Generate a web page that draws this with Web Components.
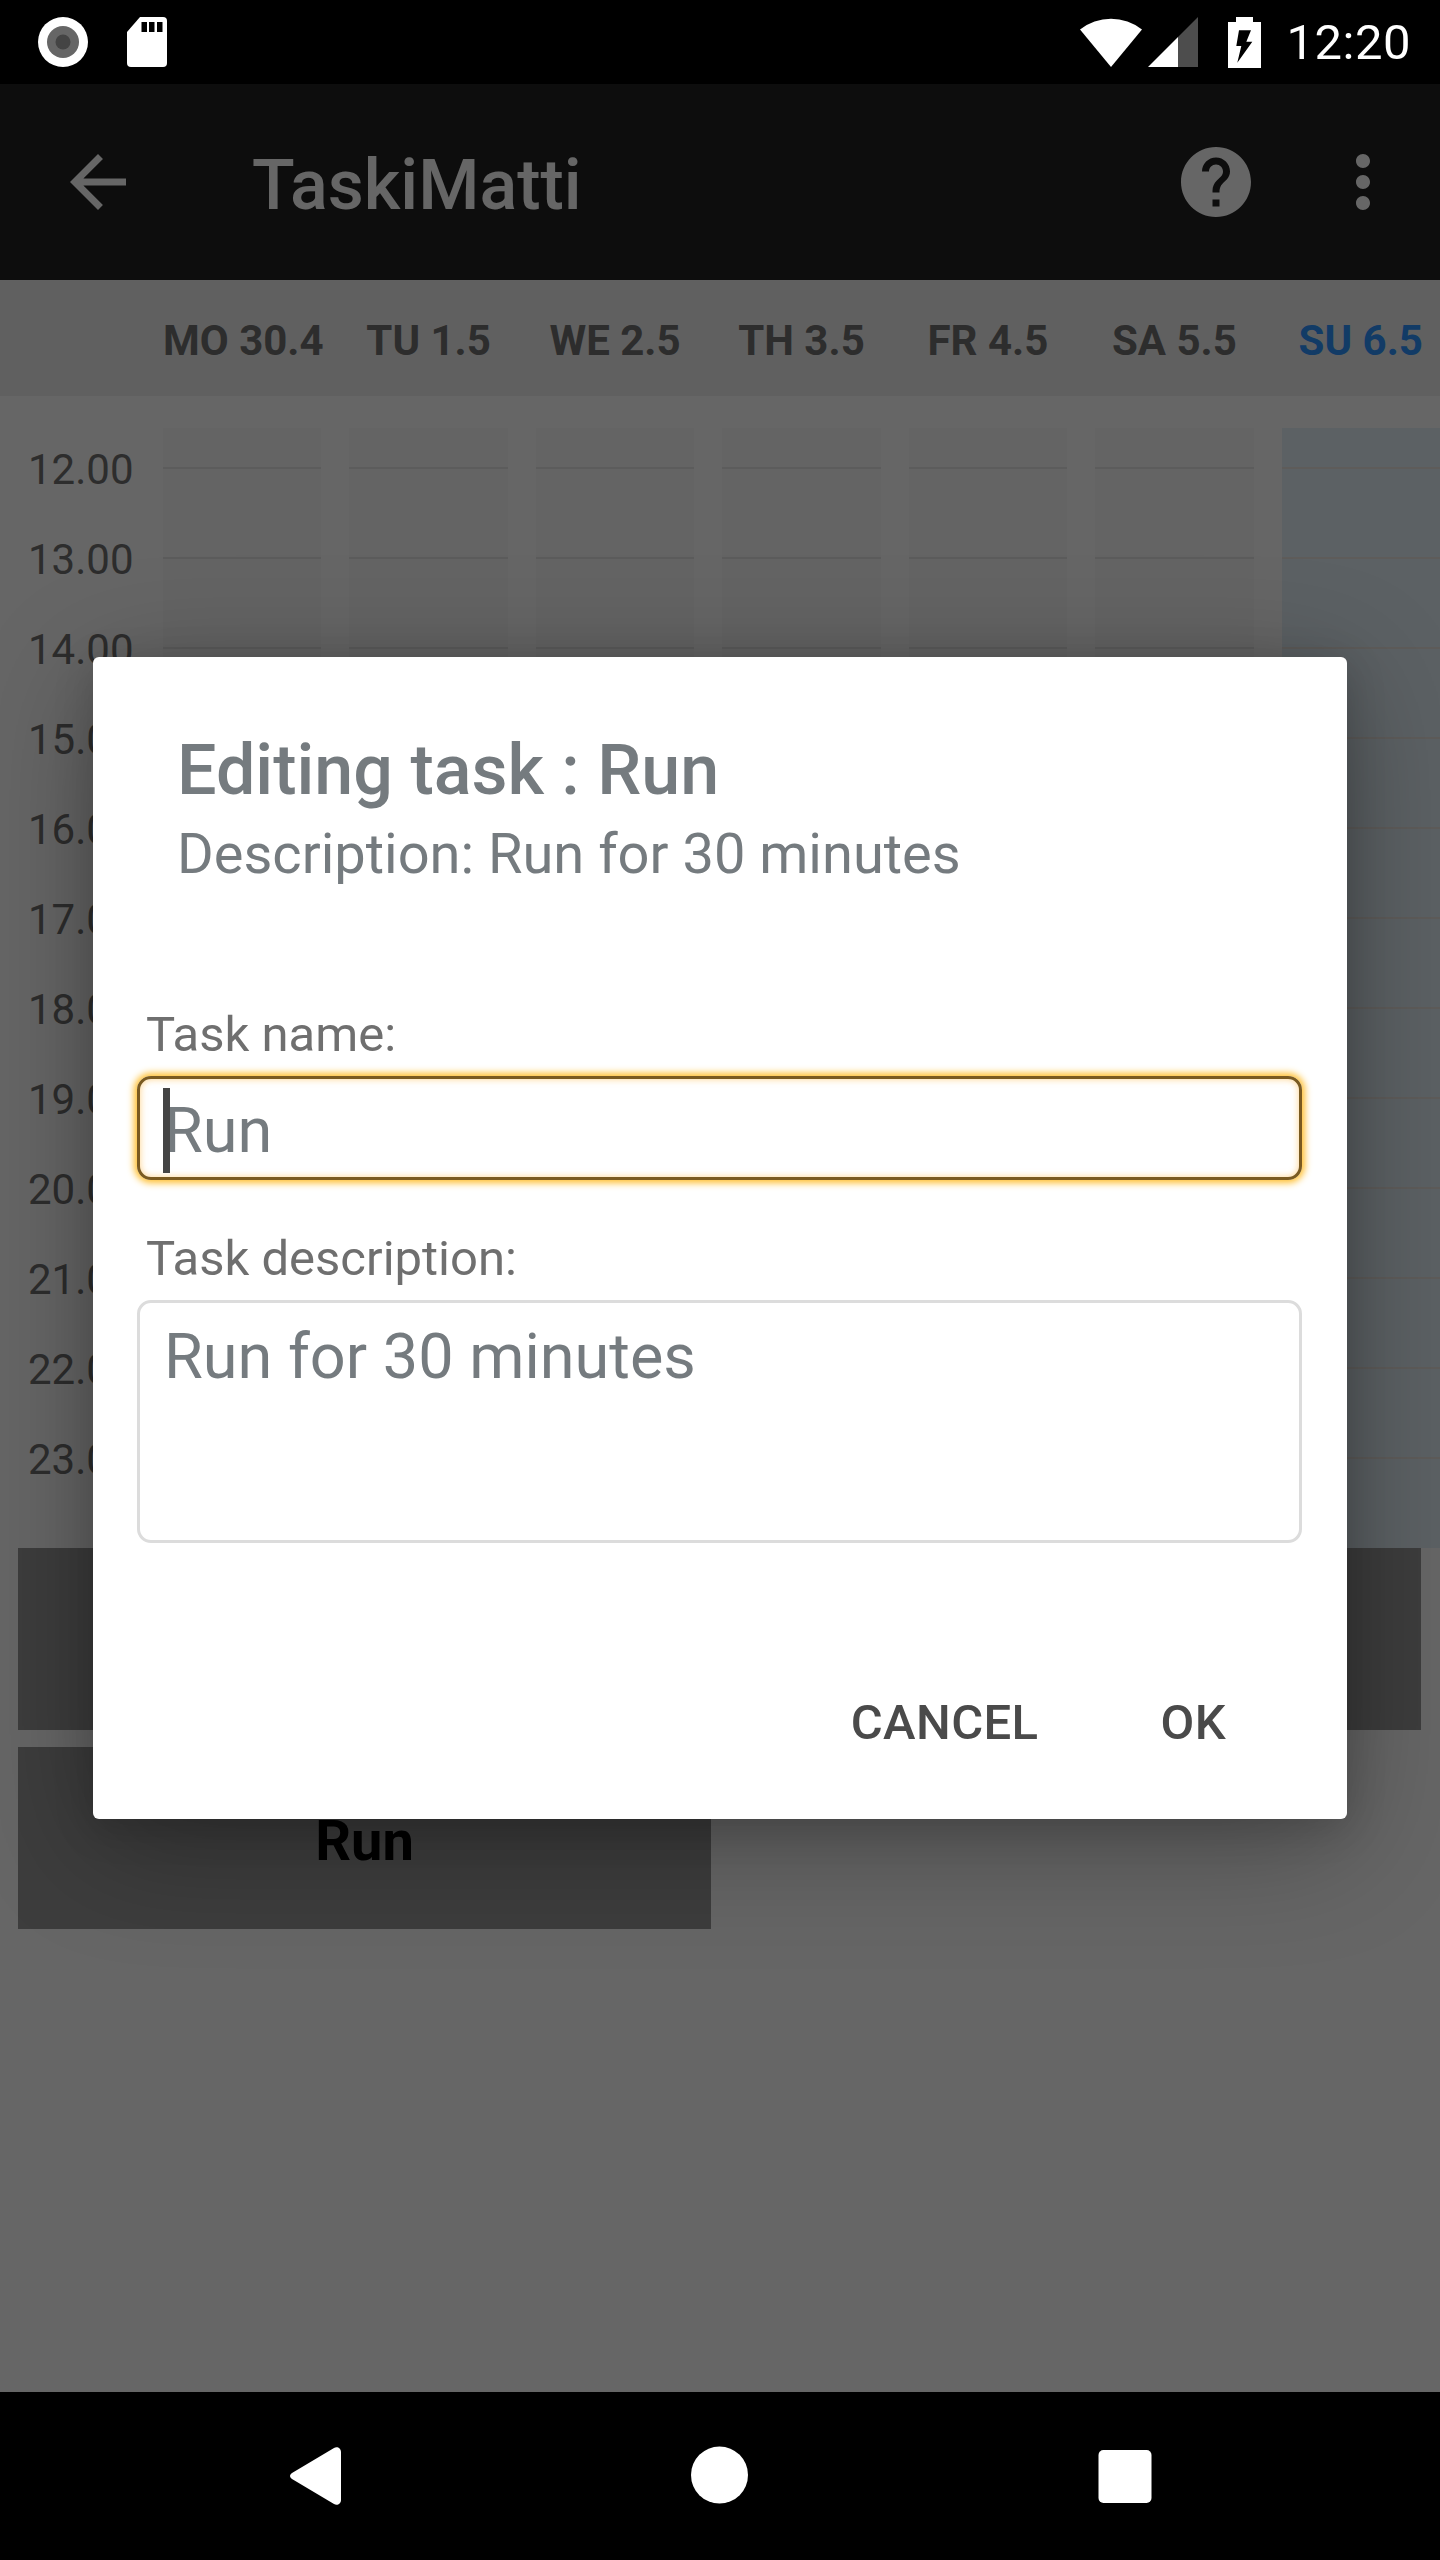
<!DOCTYPE html>
<html>
<head>
<meta charset="utf-8">
<title>TaskiMatti</title>
<style>
	html, body { margin: 0; padding: 0; background: #fff; }
	body { font-family: Roboto, "Liberation Sans", sans-serif; }
</style>
</head>
<body>

<task-app>
	<status-bar></status-bar>
	<app-toolbar>TaskiMatti</app-toolbar>
	<day-header>
		<span>MO 30.4</span><span>TU 1.5</span><span>WE 2.5</span><span>TH 3.5</span><span>FR 4.5</span><span>SA 5.5</span><span class="today">SU 6.5</span>
	</day-header>
	<week-grid>
		<hour-row>12.00</hour-row>
		<hour-row>13.00</hour-row>
		<hour-row>14.00</hour-row>
		<hour-row>15.00</hour-row>
		<hour-row>16.00</hour-row>
		<hour-row>17.00</hour-row>
		<hour-row>18.00</hour-row>
		<hour-row>19.00</hour-row>
		<hour-row>20.00</hour-row>
		<hour-row>21.00</hour-row>
		<hour-row>22.00</hour-row>
		<hour-row>23.00</hour-row>
	</week-grid>
	<task-list>
		<task-tile class="wide">Exercise</task-tile>
		<task-tile>Run</task-tile>
	</task-list>
	<nav-bar></nav-bar>
	<edit-dialog>
		<span slot="title">Editing task : Run</span>
		<span slot="subtitle">Description: Run for 30 minutes</span>
		<form-field label="Task name:" focused>Run</form-field>
		<form-field label="Task description:" multiline>Run for 30 minutes</form-field>
	</edit-dialog>
</task-app>

<script>
(function(){

	function define(name, html, setup) {
		const tmpl = document.createElement("template");
		tmpl.innerHTML = html;
		customElements.define(name, class extends HTMLElement {
			constructor() {
				super();
				this.attachShadow({mode: "open"}).appendChild(tmpl.content.cloneNode(true));
			}
			connectedCallback() {
				if (setup) setup(this);
			}
		});
	}

	define("task-app", `
		<style>
			:host {
				display: flex;
				flex-direction: column;
				position: relative;
				width: 1440px;
				height: 2560px;
				overflow: hidden;
				background: #fff;
			}
			.scrim {
				position: absolute;
				left: 0;
				right: 0;
				top: 84px;
				bottom: 168px;
				background: rgba(0, 0, 0, .6);
			}
		</style>
		<slot></slot>
		<div class="scrim"></div>
		<slot name="over"></slot>
	`);

	define("status-bar", `
		<style>
			:host {
				display: flex;
				flex: none;
				position: relative;
				z-index: 2;
				align-items: center;
				height: 84px;
				background: #000;
				color: #fff;
				padding: 0 29px 0 38px;
				box-sizing: border-box;
				font: 400 49px/84px Roboto, sans-serif;
			}
			svg { display: block; flex: none; }
			.sd { margin-left: 39px; }
			.wifi { margin-left: auto; }
			.signal { margin-left: 6px; }
			.batt { margin-left: 30px; }
			.time { margin-left: 25px; margin-top: 2px; letter-spacing: .5px; }
		</style>
		<svg width="50" height="50" viewBox="0 0 50 50">
			<circle cx="25" cy="25" r="25" fill="#fff"/>
			<circle cx="25" cy="25" r="16" fill="#666"/>
			<circle cx="25" cy="25" r="7.5" fill="#444"/>
		</svg>
		<svg class="sd" width="40" height="50" viewBox="0 0 40 50">
			<path fill="#fff" d="M13 0H36a4 4 0 0 1 4 4V46a4 4 0 0 1-4 4H4a4 4 0 0 1-4-4V15z"/>
			<path fill="#000" d="M14.500 5H20V15H14.500zM22 5H27.500V15H22zM30 5H35.500V15H30z"/>
		</svg>
		<svg class="wifi" width="62" height="50" viewBox="0 0 62 50">
			<path fill="#fff" d="M31 50L0 12.500A50 50 0 0 1 62 12.500z"/>
		</svg>
		<svg class="signal" width="50" height="50" viewBox="0 0 50 50">
			<path fill="#4d4d4d" d="M50 0V50H30V20z"/>
			<path fill="#fff" d="M0 50L30 20V50z"/>
		</svg>
		<svg class="batt" width="33" height="51" viewBox="0 0 33 51">
			<path fill="#fff" fill-rule="evenodd" d="M8 0H25V5H33V51H0V5H8z M11 13.300H23L18.300 24.700H24.300L9.300 45.700L13.300 29H8.300z"/>
		</svg>
		<span class="time">12:20</span>
	`);

	define("app-toolbar", `
		<style>
			:host {
				display: flex;
				flex: none;
				align-items: center;
				height: 196px;
				padding-left: 56px;
				padding-right: 35px;
				box-sizing: border-box;
				background: #212121;
				color: #fff;
				font: 500 70px/196px Roboto, sans-serif;
			}
			svg { display: block; flex: none; fill: #fff; }
			.title { margin-left: 112px; margin-right: auto; padding-top: 6px; }
			.more { margin-left: 63px; }
		</style>
		<svg width="84" height="84" viewBox="0 0 24 24"><path d="M20 11H7.830l5.590-5.590L12 4l-8 8 8 8 1.410-1.410L7.830 13H20v-2z"/></svg>
		<span class="title"><slot></slot></span>
		<svg width="84" height="84" viewBox="0 0 24 24"><path d="M12 2C6.480 2 2 6.480 2 12s4.480 10 10 10 10-4.480 10-10S17.520 2 12 2zm1 17h-2v-2h2v2zm2.070-7.750l-.9.920C13.450 12.900 13 13.500 13 15h-2v-.5c0-1.100.450-2.100 1.170-2.830l1.240-1.260c.370-.360.590-.860.590-1.410 0-1.100-.9-2-2-2s-2 .9-2 2H8c0-2.210 1.790-4 4-4s4 1.790 4 4c0 .880-.360 1.680-.930 2.250z"/></svg>
		<svg class="more" width="84" height="84" viewBox="0 0 24 24"><path d="M12 8c1.100 0 2-.9 2-2s-.9-2-2-2-2 .9-2 2 .9 2 2 2zm0 2c-1.100 0-2 .9-2 2s.9 2 2 2 2-.9 2-2-.9-2-2-2zm0 6c-1.100 0-2 .9-2 2s.9 2 2 2 2-.9 2-2-.9-2-2-2z"/></svg>
	`);

	define("day-header", `
		<style>
			:host {
				display: grid;
				flex: none;
				grid-template-columns: 135px repeat(7, minmax(0, 1fr));
				column-gap: 28px;
				height: 116px;
				background: #f0f0f0;
				color: #707070;
				font: 700 42px/122px Roboto, sans-serif;
				text-align: center;
				white-space: nowrap;
			}
			::slotted(.today) { color: #2d94ff; }
		</style>
		<span></span>
		<slot></slot>
	`);

	define("week-grid", `
		<style>
			:host {
				display: block;
				flex: none;
				padding-top: 32px;
				height: 1152px;
				box-sizing: border-box;
			}
		</style>
		<slot></slot>
	`);

	define("hour-row", `
		<style>
			:host {
				display: grid;
				grid-template-columns: 135px repeat(7, minmax(0, 1fr));
				column-gap: 28px;
				height: 90px;
			}
			/* the last row runs on down to the task tiles */
			:host(:last-child) { height: 130px; }
			.hour {
				padding-left: 28px;
				color: #707070;
				font: 400 42px/84px Roboto, sans-serif;
			}
			.cell {
				background: linear-gradient(#fafafa 39px, #e6e6e6 39px, #e6e6e6 41px, #fafafa 41px);
			}
			.cell.today {
				background: linear-gradient(#e6f2fa 39px, #ece6e2 39px, #ece6e2 41px, #e6f2fa 41px);
			}
		</style>
		<div class="hour"><slot></slot></div>
		<div class="cell"></div><div class="cell"></div><div class="cell"></div><div class="cell"></div><div class="cell"></div><div class="cell"></div><div class="cell today"></div>
	`);

	define("task-list", `
		<style>
			:host {
				display: flex;
				flex-direction: column;
				flex: none;
				align-items: flex-start;
				gap: 17px;
				padding: 0 19px 0 18px;
			}
		</style>
		<slot></slot>
	`);

	define("task-tile", `
		<style>
			:host {
				display: flex;
				align-items: center;
				justify-content: center;
				box-sizing: border-box;
				width: 693px;
				height: 182px;
				padding-top: 6px;
				background: #9a9a9a;
				color: #000;
				font: 700 56px/1 Roboto, sans-serif;
			}
			:host(.wide) { width: 1403px; }
		</style>
		<slot></slot>
	`);

	define("nav-bar", `
		<style>
			:host {
				display: flex;
				position: absolute;
				left: 0;
				right: 0;
				bottom: 0;
				z-index: 2;
				height: 168px;
				background: #000;
			}
			svg { position: absolute; top: 54px; fill: #fff; }
		</style>
		<svg style="left:290px" width="51" height="60" viewBox="0 0 51 60"><path d="M2 27L44 2c3-2 7 0 7 4V54c0 4-4 6-7 4L2 33c-2.600-2-2.600-4 0-6z"/></svg>
		<svg style="left:691px" width="58" height="58" viewBox="0 0 58 58"><circle cx="28.500" cy="29" r="28.500"/></svg>
		<svg style="left:1098px" width="54" height="58" viewBox="0 0 54 58"><rect x="0.500" y="4" width="53" height="53" rx="5"/></svg>
	`);

	define("edit-dialog", `
		<style>
			:host {
				display: block;
				position: absolute;
				left: 93px;
				top: 657px;
				width: 1254px;
				height: 1162px;
				box-sizing: border-box;
				padding: 71px 45px 0 44px;
				background: #fff;
				border-radius: 6px;
				box-shadow: 0 24px 120px rgba(0, 0, 0, .3), 0 8px 40px rgba(0, 0, 0, .16);
			}
			.head { padding-left: 40px; color: #757b7f; }
			.title { font: 500 70px/84px Roboto, sans-serif; }
			.sub { margin-top: 8px; font: 400 56px/68px Roboto, sans-serif; }
			.fields { margin-top: 117px; }
			.actions {
				position: absolute;
				right: 121px;
				bottom: 66px;
				display: flex;
				gap: 122px;
				color: #4a4a4a;
				letter-spacing: .4px;
				font: 500 49px/60px Roboto, sans-serif;
			}
		</style>
		<div class="head">
			<div class="title"><slot name="title"></slot></div>
			<div class="sub"><slot name="subtitle"></slot></div>
		</div>
		<div class="fields"><slot></slot></div>
		<div class="actions"><span>CANCEL</span><span>OK</span></div>
	`);

	define("form-field", `
		<style>
			:host {
				display: block;
				margin-bottom: 49px;
				color: #757b7f;
			}
			.label {
				padding-left: 9px;
				color: #6f6f6f;
				font: 400 49px/60px Roboto, sans-serif;
				margin-bottom: 11px;
			}
			.box {
				position: relative;
				box-sizing: border-box;
				height: 104px;
				padding: 0 24px;
				border: 3px solid #dcdcdc;
				border-radius: 14px;
				font: 400 63px/104px Roboto, sans-serif;
			}
			:host([multiline]) .box { height: 243px; padding-top: 2px; }
			:host([focused]) .box {
				border-color: #7a5a20;
				box-shadow: 0 0 7px 3px #ffbf30, inset 0 0 7px rgba(255, 180, 60, .6);
			}
			.caret {
				display: none;
				position: absolute;
				left: 23px;
				top: 9px;
				width: 7px;
				height: 85px;
				background: #444;
			}
			:host([focused]) .caret { display: block; }
		</style>
		<div class="label"></div>
		<div class="box"><span class="caret"></span><slot></slot></div>
	`, function(el) {
		el.shadowRoot.querySelector(".label").textContent = el.getAttribute("label");
	});

	// the dialog lies over the scrim
	document.querySelector("edit-dialog").slot = "over";

}())
</script>
</body>
</html>
